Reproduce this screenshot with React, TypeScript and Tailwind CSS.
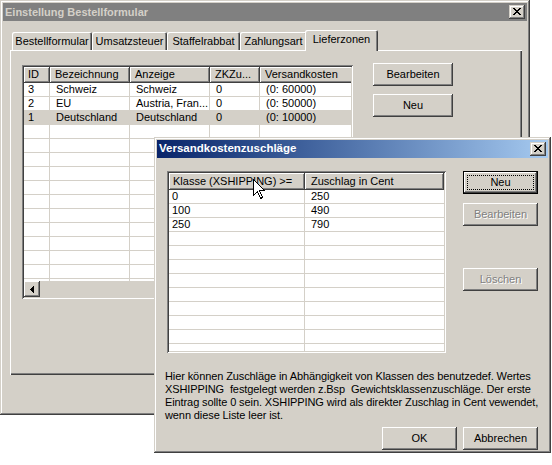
import React from "react";

const WIN =
  "shadow-[inset_-1px_-1px_#404040,inset_1px_1px_#d4d0c8,inset_-2px_-2px_#808080,inset_2px_2px_#ffffff]";
const BTN =
  "shadow-[inset_-1px_-1px_#404040,inset_1px_1px_#ffffff,inset_-2px_-2px_#808080]";
const SUNKEN =
  "shadow-[inset_1px_1px_#808080,inset_-1px_-1px_#ffffff,inset_2px_2px_#404040,inset_-2px_-2px_#d4d0c8]";

function CloseX() {
  const rows = ["11000011", "01100110", "00111100", "00011000", "00111100", "01100110", "11000011"];
  return (
    <svg width="8" height="7" viewBox="0 0 8 7" shapeRendering="crispEdges">
      {rows.flatMap((r, y) =>
        r.split("").map((c, x) => (c === "1" ? <rect key={`${x}-${y}`} x={x} y={y} width="1" height="1" fill="#000" /> : null))
      )}
    </svg>
  );
}

function CloseButton() {
  return (
    <div className={`w-[16px] h-[14px] bg-[#d4d0c8] flex items-center justify-center ${WIN}`}>
      <div className="-mt-[1px] -ml-[1px] flex">
        <CloseX />
      </div>
    </div>
  );
}

function Button({ label, w, disabled, isDefault }: { label: string; w: string; disabled?: boolean; isDefault?: boolean }) {
  return (
    <div
      className={`relative ${w} h-[23px] bg-[#d4d0c8] flex items-center justify-center ${
        isDefault
          ? "shadow-[inset_0_0_0_1px_#000000,inset_-2px_-2px_#404040,inset_2px_2px_#ffffff,inset_-3px_-3px_#808080]"
          : BTN
      }`}
    >
      <span
        className={
          disabled ? "text-[#808080] [text-shadow:1px_1px_0_#ffffff]" : "text-black"
        }
      >
        {label}
      </span>
      {isDefault && <div className="absolute left-[4px] right-[4px] top-[4px] bottom-[4px] border border-dotted border-black" />}
    </div>
  );
}

function Tab({ label, w, active }: { label: string; w: string; active?: boolean }) {
  return (
    <div
      className={`${w} ${
        active ? "h-[21px] -mb-[1px] -ml-[2px] relative z-10 pb-[3px]" : "h-[18px]"
      } bg-[#d4d0c8] flex items-center justify-center rounded-t-[2px] shadow-[inset_1px_1px_#ffffff,inset_-1px_0_#404040,inset_-2px_0_#808080]`}
    >
      <span>{label}</span>
    </div>
  );
}

const mainCols = [
  { label: "ID", w: "w-[26px]" },
  { label: "Bezeichnung", w: "w-[80px]" },
  { label: "Anzeige", w: "w-[80px]" },
  { label: "ZKZu...", w: "w-[50px]" },
  { label: "Versandkosten", w: "w-[100px]" },
];

const mainRows = [
  ["3", "Schweiz", "Schweiz", "0", "(0: 60000)"],
  ["2", "EU", "Austria, Fran...", "0", "(0: 50000)"],
  ["1", "Deutschland", "Deutschland", "0", "(0: 10000)"],
];

function MainList() {
  const empty = Array.from({ length: 12 }, () => ["", "", "", "", ""]);
  const rows = [...mainRows, ...empty];
  return (
    <div className={`w-[331px] h-[234px] p-[2px] bg-white ${SUNKEN}`}>
      <div className="w-full h-full flex flex-col overflow-hidden">
        <div className="flex h-[16px] shrink-0">
          {mainCols.map((c, i) => (
            <div key={i} className={`${c.w} shrink-0 h-[16px] bg-[#d4d0c8] leading-[15px] ${BTN} ${i === 0 ? "pl-[4px]" : "pl-[5px]"}`}>
              {c.label}
            </div>
          ))}
        </div>
        <div className="flex-1 overflow-hidden">
          {rows.map((r, ri) => (
            <div key={ri} className={`flex h-[14px] ${ri === 2 ? "bg-[#d4d0c8]" : "bg-white"}`}>
              {r.map((cell, ci) => (
                <div
                  key={ci}
                  className={`${mainCols[ci].w} shrink-0 h-[14px] border-b border-r border-[#d4d0c8] leading-[13px] whitespace-nowrap overflow-hidden ${
                    ci === 0 ? "pl-[4px]" : "pl-[6px]"
                  }`}
                >
                  {cell}
                </div>
              ))}
            </div>
          ))}
        </div>
        <div className="flex h-[16px] shrink-0 bg-[#d4d0c8]">
          <div className={`w-[16px] h-[16px] flex items-center justify-center ${BTN}`}>
            <svg width="4" height="7" viewBox="0 0 4 7" shapeRendering="crispEdges" className="-ml-[1px]">
              <path d="M3 0h1v7h-1zM2 1h1v5h-1zM1 2h1v3h-1zM0 3h1v1h-1z" fill="#000" />
            </svg>
          </div>
          <div className="flex-1" />
        </div>
      </div>
    </div>
  );
}

const subRows = [
  ["0", "250"],
  ["100", "490"],
  ["250", "790"],
];

function SubList() {
  const rows = [...subRows, ...Array.from({ length: 10 }, () => ["", ""])];
  return (
    <div className={`w-[279px] h-[182px] p-[2px] bg-white ${SUNKEN}`}>
      <div className="w-full h-full flex flex-col overflow-hidden">
        <div className="flex h-[17px] shrink-0">
          <div className={`w-[136px] shrink-0 h-[17px] bg-[#d4d0c8] pl-[4px] leading-[16px] ${BTN}`}>Klasse (XSHIPPING) &gt;=</div>
          <div className={`w-[139px] shrink-0 h-[17px] bg-[#d4d0c8] pl-[6px] leading-[16px] ${BTN}`}>Zuschlag in Cent</div>
        </div>
        <div className="flex-1 overflow-hidden">
          {rows.map((r, ri) => (
            <div key={ri} className="flex h-[14px]">
              <div className="w-[136px] shrink-0 h-[14px] border-b border-r border-[#d4d0c8] pl-[3px] leading-[13px]">{r[0]}</div>
              <div className="w-[139px] shrink-0 h-[14px] border-b border-[#d4d0c8] pl-[6px] leading-[13px]">{r[1]}</div>
            </div>
          ))}
        </div>
      </div>
    </div>
  );
}

function Cursor() {
  return (
    <svg width="13" height="21" viewBox="0 0 13 21" shapeRendering="crispEdges">
      <path d="M0.5 0.5 L0.5 16.5 L4.5 12.5 L7.5 19.5 L9.5 18.5 L6.5 11.5 L11.5 11.5 Z" fill="#fff" stroke="#000" strokeWidth="1" />
    </svg>
  );
}

const paragraph = [
  "Hier können Zuschläge in Abhängigkeit von Klassen des benutzedef. Wertes",
  "XSHIPPING  festgelegt werden z.Bsp  Gewichtsklassenzuschläge. Der erste",
  "Eintrag sollte 0 sein. XSHIPPING wird als direkter Zuschlag in Cent vewendet,",
  "wenn diese Liste leer ist.",
];

export default function App() {
  return (
    <div className="relative w-[552px] h-[465px] bg-white overflow-hidden font-['Liberation_Sans',Arial,sans-serif] text-[11px] text-black">
      {/* Main window */}
      <div className={`absolute left-0 top-0 w-[530px] h-[415px] bg-[#d4d0c8] p-[3px] ${WIN}`}>
        <div className="h-[18px] bg-[#808080] flex items-center justify-between pl-[2px] pr-[2px]">
          <span className="font-bold text-[#d4d0c8] text-[11px]">Einstellung Bestellformular</span>
          <CloseButton />
        </div>
        <div className="px-[7px] pt-[9px]">
          <div className="flex items-end h-[20px] pl-[2px]">
            <Tab label="Bestellformular" w="w-[80px]" />
            <Tab label="Umsatzsteuer" w="w-[75px]" />
            <Tab label="Staffelrabbat" w="w-[73px]" />
            <Tab label="Zahlungsart" w="w-[67px]" />
            <Tab label="Lieferzonen" w="w-[73px]" active />
          </div>
          <div className="w-[512px] h-[325px] shadow-[inset_1px_1px_#ffffff,inset_-1px_-1px_#404040,inset_-2px_-2px_#808080]">
            <div className="flex pl-[12px] pt-[15px]">
              <MainList />
              <div className="ml-[20px] -mt-[2px] flex flex-col gap-[8px]">
                <Button label="Bearbeiten" w="w-[80px]" />
                <Button label="Neu" w="w-[80px]" />
              </div>
            </div>
          </div>
        </div>
      </div>

      {/* Sub dialog */}
      <div className={`absolute left-[154px] top-[137px] w-[397px] h-[316px] bg-[#d4d0c8] p-[3px] ${WIN}`}>
        <div className="h-[18px] bg-gradient-to-r from-[#0a246a] to-[#a6caf0] flex items-center justify-between pl-[2px] pr-[2px]">
          <span className="font-bold text-white text-[11.5px]">Versandkostenzuschläge</span>
          <CloseButton />
        </div>
        <div className="flex pl-[10px] pt-[13px]">
          <SubList />
          <div className="ml-[17px] flex flex-col">
            <Button label="Neu" w="w-[75px]" isDefault />
            <div className="mt-[9px]">
              <Button label="Bearbeiten" w="w-[75px]" disabled />
            </div>
            <div className="mt-[42px]">
              <Button label="Löschen" w="w-[75px]" disabled />
            </div>
          </div>
        </div>
        <div className="pl-[8px] mt-[17px] leading-[13px] flex flex-col">
          {paragraph.map((l, i) => (
            <div key={i} className="whitespace-pre tracking-[-0.1px]">
              {l}
            </div>
          ))}
        </div>
        <div className="flex justify-end gap-[6px] pr-[10px] mt-[5px]">
          <Button label="OK" w="w-[75px]" />
          <Button label="Abbrechen" w="w-[75px]" />
        </div>
      </div>

      <div className="absolute left-[253px] top-[179px]">
        <Cursor />
      </div>
    </div>
  );
}
